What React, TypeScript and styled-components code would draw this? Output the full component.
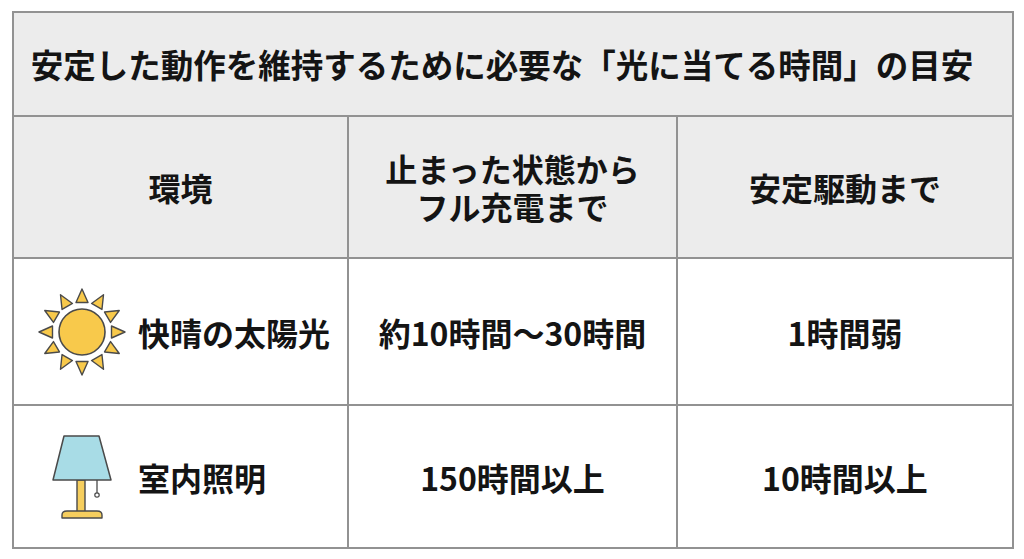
import React from 'react';
import styled, { createGlobalStyle } from 'styled-components';

const GlobalStyle = createGlobalStyle`
  html, body {
    margin: 0;
    padding: 0;
    background: #ffffff;
  }
  body {
    font-family: "Noto Sans CJK JP", "Noto Sans", sans-serif;
    color: #141414;
  }
`;

const Page = styled.div`
  width: 1024px;
  height: 559px;
  padding: 11px 12px;
  box-sizing: border-box;
`;

const Table = styled.table`
  width: 1000px;
  height: 536px;
  border-collapse: collapse;
  table-layout: fixed;
  font-weight: 700;
`;

const Col = styled.col<{ $w: number }>`
  width: ${({ $w }) => $w}px;
`;

const Row = styled.tr<{ $h: number }>`
  height: ${({ $h }) => $h}px;
`;

const Cell = styled.td<{ $head?: boolean }>`
  border: 2px solid #929292;
  background: ${({ $head }) => ($head ? '#ececec' : '#ffffff')};
  text-align: center;
  vertical-align: middle;
  padding: 0;
  font-size: 32px;
  line-height: 38px;
`;

const TitleCell = styled(Cell)`
  font-size: 32.5px;
  padding-right: 22px;
`;

const Line = styled.span`
  display: block;
`;

const EnvInner = styled.div`
  display: flex;
  align-items: center;
  gap: 10px;
  padding-left: 22px;
`;

const IconSlot = styled.div`
  width: 92px;
  height: 92px;
  display: flex;
  align-items: center;
  justify-content: center;
`;

const SunIcon = () => {
  const rays = Array.from({ length: 12 }, (_, i) => i * 30);
  return (
    <svg width="92" height="92" viewBox="-46 -46 92 92">
      {rays.map((a) => (
        <polygon
          key={a}
          points="-6,-29.5 6,-29.5 0,-43"
          transform={`rotate(${a})`}
          fill="#F8C94B"
          stroke="#4a4a4a"
          strokeWidth="1.4"
          strokeLinejoin="round"
        />
      ))}
      <circle r="23" fill="#F8C94B" stroke="#4a4a4a" strokeWidth="1.6" />
    </svg>
  );
};

const LampIcon = () => (
  <svg width="70" height="92" viewBox="0 0 70 92">
    <rect x="30" y="49" width="8" height="32" fill="#F6CE5E" stroke="#4a4a4a" strokeWidth="1.4" />
    <path
      d="M15 87 L15 84 Q15 80 20 80 L50 80 Q55 80 55 84 L55 87 Z"
      fill="#F6CE5E"
      stroke="#4a4a4a"
      strokeWidth="1.4"
      strokeLinejoin="round"
    />
    <line x1="50" y1="49" x2="50" y2="62" stroke="#4a4a4a" strokeWidth="1.3" />
    <circle cx="50" cy="64" r="2.2" fill="#ffffff" stroke="#4a4a4a" strokeWidth="1.2" />
    <polygon
      points="17,5 52,5 64,49 6,49"
      fill="#A8DCE6"
      stroke="#4a4a4a"
      strokeWidth="1.5"
      strokeLinejoin="round"
    />
  </svg>
);

const rows = [
  { icon: <SunIcon />, env: '快晴の太陽光', full: '約10時間～30時間', stable: '1時間弱', h: 147 },
  { icon: <LampIcon />, env: '室内照明', full: '150時間以上', stable: '10時間以上', h: 143 },
];

export default function App() {
  return (
    <Page>
      <GlobalStyle />
      <Table>
        <colgroup>
          <Col $w={335} />
          <Col $w={329} />
          <Col $w={336} />
        </colgroup>
        <tbody>
          <Row $h={104}>
            <TitleCell $head colSpan={3}>
              安定した動作を維持するために必要な「光に当てる時間」の目安
            </TitleCell>
          </Row>
          <Row $h={142}>
            <Cell $head>環境</Cell>
            <Cell $head>
              <Line>止まった状態から</Line>
              <Line>フル充電まで</Line>
            </Cell>
            <Cell $head>安定駆動まで</Cell>
          </Row>
          {rows.map((r) => (
            <Row key={r.env} $h={r.h}>
              <Cell>
                <EnvInner>
                  <IconSlot>{r.icon}</IconSlot>
                  <span>{r.env}</span>
                </EnvInner>
              </Cell>
              <Cell>{r.full}</Cell>
              <Cell>{r.stable}</Cell>
            </Row>
          ))}
        </tbody>
      </Table>
    </Page>
  );
}
